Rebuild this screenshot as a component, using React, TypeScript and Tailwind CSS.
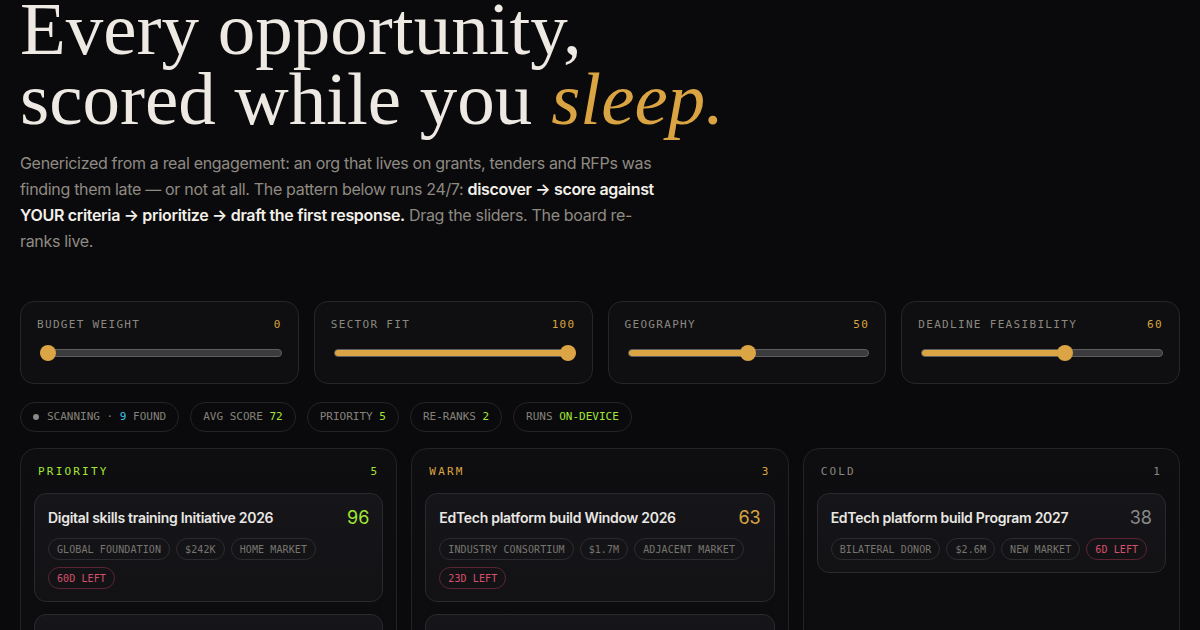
import React from "react";

type Slider = { label: string; value: number };

type Tone = "neutral" | "danger";

type Opportunity = {
  title: string;
  score: number;
  tags: { text: string; tone?: Tone }[];
};

type Column = {
  name: string;
  accent: string;
  scoreColor: string;
  count: number;
  items: Opportunity[];
};

const sliders: Slider[] = [
  { label: "Budget weight", value: 0 },
  { label: "Sector fit", value: 100 },
  { label: "Geography", value: 50 },
  { label: "Deadline feasibility", value: 60 },
];

const columns: Column[] = [
  {
    name: "Priority",
    accent: "text-[#a3e635]",
    scoreColor: "text-[#a3e635]",
    count: 5,
    items: [
      {
        title: "Digital skills training Initiative 2026",
        score: 96,
        tags: [
          { text: "Global foundation" },
          { text: "$242K" },
          { text: "Home market" },
          { text: "60d left", tone: "danger" },
        ],
      },
      {
        title: "Public health data Tender 2026",
        score: 91,
        tags: [
          { text: "Multilateral fund" },
          { text: "$880K" },
          { text: "Home market" },
        ],
      },
    ],
  },
  {
    name: "Warm",
    accent: "text-[#d9a441]",
    scoreColor: "text-[#d9a441]",
    count: 3,
    items: [
      {
        title: "EdTech platform build Window 2026",
        score: 63,
        tags: [
          { text: "Industry consortium" },
          { text: "$1.7M" },
          { text: "Adjacent market" },
          { text: "23d left", tone: "danger" },
        ],
      },
      {
        title: "Climate resilience RFP 2026",
        score: 58,
        tags: [
          { text: "Bilateral donor" },
          { text: "$420K" },
          { text: "Adjacent market" },
        ],
      },
    ],
  },
  {
    name: "Cold",
    accent: "text-[#8a877f]",
    scoreColor: "text-[#8a8a8a]",
    count: 1,
    items: [
      {
        title: "EdTech platform build Program 2027",
        score: 38,
        tags: [
          { text: "Bilateral donor" },
          { text: "$2.6M" },
          { text: "New market" },
          { text: "6d left", tone: "danger" },
        ],
      },
    ],
  },
];

const mono = "font-['DejaVu_Sans_Mono',monospace]";

function SliderCard({ slider }: { slider: Slider }) {
  const pct = slider.value / 100;
  return (
    <div className="rounded-[14px] border border-[#26262a] bg-[#0f0f11] px-4 pt-[15px] pb-[22px]">
      <div className={`flex items-center justify-between text-[11px] leading-4 uppercase tracking-[0.12em] ${mono}`}>
        <span className="text-[#8b8880]">{slider.label}</span>
        <span className="text-[#d9a441]">{slider.value}</span>
      </div>
      <div className="relative mt-3 h-4">
        <div className="absolute left-[3px] right-0 top-1 h-2 rounded-full border border-[#5e5e5e] bg-[#3b3b3d]">
          <div
            className="h-full rounded-full bg-[#dba444]"
            style={{ width: `${pct * 100}%` }}
          />
        </div>
        <div
          className="absolute top-0 h-4 w-4 rounded-full bg-[#dba444]"
          style={{ left: `calc(${pct} * (100% - 16px) + 3px * ${1 - pct})` }}
        />
      </div>
    </div>
  );
}

function Stat({ children }: { children: React.ReactNode }) {
  return (
    <div className={`flex h-[30px] items-center rounded-full border border-[#242427] px-3 text-[11px] uppercase text-[#85827b] ${mono}`}>
      {children}
    </div>
  );
}

function Tag({ text, tone = "neutral" }: { text: string; tone?: Tone }) {
  const cls =
    tone === "danger"
      ? "border-[#5a2432] text-[#d9506a]"
      : "border-[#2c2c30] text-[#78756f]";
  return (
    <span className={`flex h-[22px] items-center rounded-full border px-2 text-[10px] uppercase tracking-[0.01em] ${mono} ${cls}`}>
      {text}
    </span>
  );
}

function OppCard({ item, scoreColor }: { item: Opportunity; scoreColor: string }) {
  return (
    <div className="rounded-[12px] border border-[#2a2a2e] bg-gradient-to-b from-[#16161a] to-[#121215] px-[13px] pt-[14px] pb-[12px]">
      <div className="flex items-center justify-between gap-3">
        <span className="text-[14px] font-semibold leading-5 tracking-[-0.02em] text-[#e9e7e3]">{item.title}</span>
        <span className={`text-[18px] leading-5 ${scoreColor}`}>{item.score}</span>
      </div>
      <div className="mt-[10px] flex flex-wrap gap-x-[6px] gap-y-[7px]">
        {item.tags.map((t) => (
          <Tag key={t.text} text={t.text} tone={t.tone} />
        ))}
      </div>
    </div>
  );
}

export default function App() {
  return (
    <div className="min-h-screen bg-[#0a0a0c] font-['Inter',sans-serif] text-[#8f8b83]">
      <div className="px-5">
        <h1 className="-mt-[6px] font-['Liberation_Serif',serif] text-[75px] leading-[70px] font-normal text-[#eeeae3]">
          Every opportunity,
          <br />
          scored while you <em className="italic text-[#d9a441]">sleep.</em>
        </h1>

        <p className="mt-[16px] max-w-[640px] text-[16px] leading-[26px] tracking-[-0.02em]">
          Genericized from a real engagement: an org that lives on grants, tenders and RFPs was finding
          them late — or not at all. The pattern below runs 24/7:{" "}
          <strong className="font-semibold text-[#f3f0ea]">
            discover → score against YOUR criteria → prioritize → draft the first response.
          </strong>{" "}
          Drag the sliders. The board re-ranks live.
        </p>

        <div className="mt-[47px] grid grid-cols-4 gap-[15px]">
          {sliders.map((s) => (
            <SliderCard key={s.label} slider={s} />
          ))}
        </div>

        <div className="mt-[18px] flex flex-wrap gap-[11px]">
          <Stat>
            <span className="mr-2 h-[6px] w-[6px] rounded-full bg-[#8a8a8a]" />
            Scanning · <span className="mx-[1ch] text-[#3fc3ea]">9</span>found
          </Stat>
          <Stat>
            Avg score <span className="ml-[1ch] text-[#a3e635]">72</span>
          </Stat>
          <Stat>
            Priority <span className="ml-[1ch] text-[#a3e635]">5</span>
          </Stat>
          <Stat>
            Re-ranks <span className="ml-[1ch] text-[#a3e635]">2</span>
          </Stat>
          <Stat>
            Runs <span className="ml-[1ch] text-[#a3e635]">on-device</span>
          </Stat>
        </div>

        <div className="mt-[16px] grid grid-cols-3 gap-[14px] pb-10">
          {columns.map((col) => (
            <div
              key={col.name}
              className="min-h-[300px] rounded-[16px] border border-[#232326] bg-gradient-to-b from-[#0e0e10] to-[#0b0b0d] px-[13px] pt-[15px] pb-[13px]"
            >
              <div className={`flex items-center justify-between px-1 text-[11px] leading-4 uppercase tracking-[0.2em] ${mono}`}>
                <span className={col.accent}>{col.name}</span>
                <span className={col.accent}>{col.count}</span>
              </div>
              <div className="mt-[13px] flex flex-col gap-3">
                {col.items.map((it) => (
                  <OppCard key={it.title} item={it} scoreColor={col.scoreColor} />
                ))}
              </div>
            </div>
          ))}
        </div>
      </div>
    </div>
  );
}
